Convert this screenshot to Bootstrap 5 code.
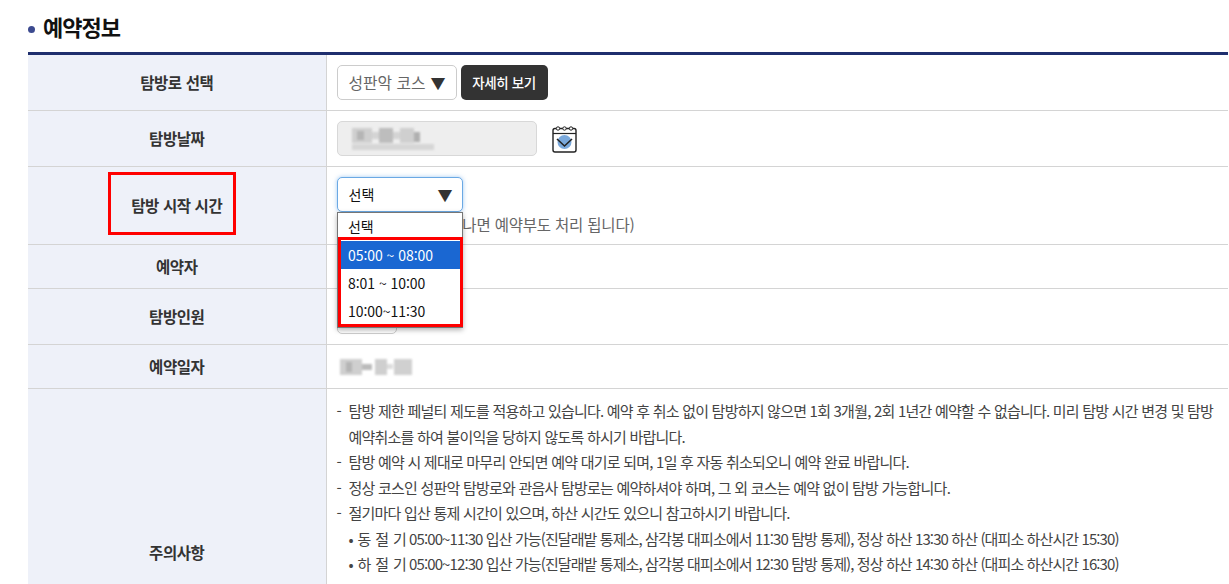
<!doctype html>
<html lang="ko">
<head>
<meta charset="utf-8">
<title>예약정보</title>
<link href="https://cdn.jsdelivr.net/npm/bootstrap@5.3.0/dist/css/bootstrap.min.css" rel="stylesheet">
<style>
html,body{height:584px;overflow:hidden;background:#fff}
body{font-family:"Noto Sans CJK KR","Noto Sans",sans-serif;color:#333;font-size:15px}
.pg{padding-left:28px;width:1228px}
.ttl{height:52px;display:flex;align-items:center;gap:8px;margin:0;font-size:22px;font-weight:700;color:#111;letter-spacing:-1px}
.ttl i{width:7px;height:7px;border-radius:50%;background:#3c4a8f;margin-top:7px}
.fm{width:100%;border-collapse:collapse;table-layout:fixed;border-top:3px solid #1f2f6e}
.fm th{width:298px;background:#eef1f9;text-align:center;font-weight:700;font-size:15.500px;color:#333;letter-spacing:-.4px;border-bottom:1px solid #d4d4d4;border-right:1px solid #d4d4d4;padding:0}
.fm td{padding:0 0 0 10px;border-bottom:1px solid #d4d4d4;position:relative;vertical-align:middle}
.r1{height:57px}.r2{height:56px}.r3{height:78px}.r4{height:44px}.r5{height:56px}.r6{height:44px}.r7{height:328px}
.sel{display:inline-flex;align-items:center;justify-content:space-between;height:35px;background:#fff;border:1px solid #ccc;border-radius:5px;padding:0 10px 0 11px;font-size:15.800px;color:#666;white-space:nowrap}
.sel b{font-size:15px;font-weight:400;color:#333;line-height:1}
.s1{width:120px}
.s2{width:126px;border-color:#6ba9e4;box-shadow:0 0 4px rgba(70,150,230,.5);color:#111;position:absolute;left:10px;top:10px;font-size:14px;padding-right:9px}
.s3{width:60px;position:absolute;left:10px;top:10px}
.det{height:35px;width:87px;background:#333;color:#fff;border:0;border-radius:5px;font-size:13.500px;font-weight:500;padding:0;letter-spacing:-.4px}
.dt{width:200px;height:35px;background:#eee;border:1px solid #d8d8d8;border-radius:5px;display:inline-flex;align-items:center;padding-left:7px}
.hint{position:absolute;left:10px;top:46px;width:298px;text-align:right;font-size:15.500px;color:#666;letter-spacing:-.2px;white-space:nowrap;line-height:22px}
.ddl{position:absolute;left:337px;top:212px;width:126px;height:116px;background:#fff;border:1px solid #767676;box-shadow:0 2px 5px rgba(0,0,0,.3);font-size:14px;color:#111;z-index:3}
.ddl div{height:28px;line-height:28px;padding-left:10px;letter-spacing:-.05px}
.ddl .o0{height:24px;line-height:26px}
.ddl .o1{margin-top:4px;background:#1a67d2;color:#fff}
.redbox{position:absolute;border:3px solid #f00;z-index:4}
.rb1{left:108px;top:172px;width:128px;height:63px}
.rb2{left:338px;top:237px;width:125px;height:90px}
.nt{list-style:none;margin:0;padding:9px 0 0;font-size:15px;line-height:25.500px;color:#444;letter-spacing:-.78px;white-space:nowrap}
.nt li{padding-left:12px;text-indent:-12px}
.nt li span{display:inline-block;width:12px;text-indent:0}
.nt .sub{padding-left:12px;text-indent:0;letter-spacing:-.9px}
.nt .sub em{font-style:normal;word-spacing:1.500px}
.cal{margin-left:14px;vertical-align:middle}
.r7 td{vertical-align:top}
.wrapr{position:relative}
.mos{filter:blur(1px)}
</style>
</head>
<body>
<div class="pg wrapr">
<h2 class="ttl"><i></i>예약정보</h2>
<table class="fm">
<tr class="r1"><th>탐방로 선택</th><td><div class="d-flex align-items-center gap-1"><span class="sel s1">성판악 코스 <b>▼</b></span><button class="det" type="button">자세히 보기</button></div></td></tr>
<tr class="r2"><th>탐방날짜</th><td><div class="d-flex align-items-center"><span class="dt"><svg class="mos" width="92" height="30" viewBox="0 0 92 30"><g fill="#cfcfcf"><rect x="7" y="4" width="20" height="15"/><rect x="12" y="7" width="7" height="9" fill="#b5b5b5"/><rect x="27" y="8" width="7" height="7" fill="#d4d4d4"/><rect x="34" y="4" width="14" height="15" fill="#bdbdbd"/><rect x="48" y="8" width="7" height="7" fill="#d4d4d4"/><rect x="55" y="4" width="14" height="15"/><rect x="69" y="8" width="6" height="10" fill="#b0b0b0"/><rect x="7" y="20" width="82" height="6" fill="#d6d6d6"/></g></svg></span>
<svg class="cal" width="28" height="30" viewBox="0 0 28 30"><rect x="2" y="4.500" width="23" height="23.500" rx="2" fill="#fff" stroke="#222" stroke-width="1.400"/><path d="M2 9.500H25" stroke="#222" stroke-width="1.200"/><circle cx="7" cy="4.500" r="1.700" fill="#fff" stroke="#222"/><circle cx="13.500" cy="4.500" r="1.700" fill="#fff" stroke="#222"/><circle cx="20" cy="4.500" r="1.700" fill="#fff" stroke="#222"/><circle cx="13.500" cy="18" r="7" fill="#7aa9dc"/><path d="M6 15L13.500 22L21 15" fill="none" stroke="#222" stroke-width="1.600"/></svg></div></td></tr>
<tr class="r3"><th>탐방 시작 시간</th><td><span class="sel s2">선택 <b>▼</b></span><div class="hint">(시간이 지나면 예약부도 처리 됩니다)</div></td></tr>
<tr class="r4"><th>예약자</th><td></td></tr>
<tr class="r5"><th>탐방인원</th><td><span class="sel s3"></span></td></tr>
<tr class="r6"><th>예약일자</th><td><svg class="mos" width="78" height="22" viewBox="0 0 78 22"><g fill="#cfcfcf"><rect x="3" y="3" width="22" height="16"/><rect x="9" y="6" width="6" height="10" fill="#b5b5b5"/><rect x="25" y="8" width="10" height="6" fill="#bbb"/><rect x="38" y="3" width="12" height="16"/><rect x="50" y="8" width="6" height="5" fill="#ddd"/><rect x="57" y="3" width="18" height="16" fill="#d0d0d0"/></g></svg></td></tr>
<tr class="r7"><th class="align-middle">주의사항</th><td>
<ul class="nt">
<li><span>-</span>탐방 제한 페널티 제도를 적용하고 있습니다. 예약 후 취소 없이 탐방하지 않으면 1회 3개월, 2회 1년간 예약할 수 없습니다. 미리 탐방 시간 변경 및 탐방<br>예약취소를 하여 불이익을 당하지 않도록 하시기 바랍니다.</li>
<li><span>-</span>탐방 예약 시 제대로 마무리 안되면 예약 대기로 되며, 1일 후 자동 취소되오니 예약 완료 바랍니다.</li>
<li><span>-</span>정상 코스인 성판악 탐방로와 관음사 탐방로는 예약하셔야 하며, 그 외 코스는 예약 없이 탐방 가능합니다.</li>
<li><span>-</span>절기마다 입산 통제 시간이 있으며, 하산 시간도 있으니 참고하시기 바랍니다.</li>
<li class="sub"><em>• 동 절 기</em> 05:00~11:30 입산 가능(진달래밭 통제소, 삼각봉 대피소에서 11:30 탐방 통제), 정상 하산 13:30 하산 (대피소 하산시간 15:30)</li>
<li class="sub"><em>• 하 절 기</em> 05:00~12:30 입산 가능(진달래밭 통제소, 삼각봉 대피소에서 12:30 탐방 통제), 정상 하산 14:30 하산 (대피소 하산시간 16:30)</li>
</ul></td></tr>
</table>
</div>
<div class="ddl"><div class="o0">선택</div><div class="o1">05:00 ~ 08:00</div><div>8:01 ~ 10:00</div><div>10:00~11:30</div></div>
<div class="redbox rb1"></div>
<div class="redbox rb2"></div>
<script src="https://cdn.jsdelivr.net/npm/bootstrap@5.3.0/dist/js/bootstrap.bundle.min.js"></script>
</body>
</html>
